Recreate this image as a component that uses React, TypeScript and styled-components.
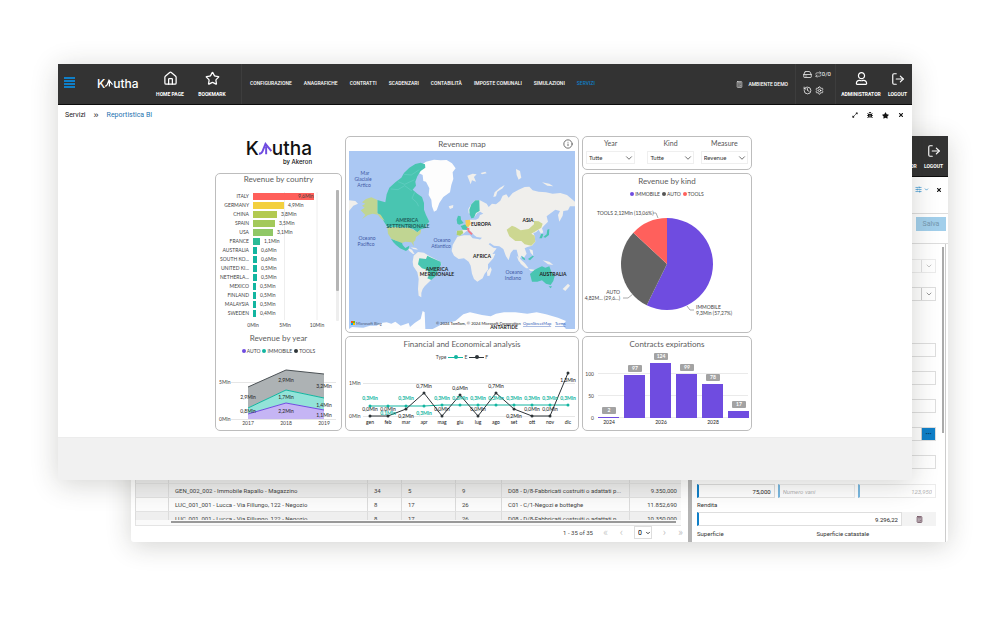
import React from "react";
import styled, { createGlobalStyle } from "styled-components";
import {
  Calculator,
  ChevronDown,
  HardDrive,
  History,
  House,
  Info,
  LogOut,
  Repeat,
  Settings,
  SlidersHorizontal,
  Star,
} from "lucide-react";
import { FaBug, FaExpandAlt, FaRegUser, FaStar, FaTimes } from "react-icons/fa";

const ui = `Roboto, "Liberation Sans", sans-serif`;
const report = `Lato, "Open Sans", sans-serif`;
const violet = "#6f4ce0";
const teal = "#12b5a0";
const ink = "#2d3438";
const blue = "#0f7fc8";

const GlobalStyle = createGlobalStyle`
  * { box-sizing: border-box; }
  body { margin: 0; background: #fff; font-family: ${ui}; color: #333; }
  button, input, select { font-family: inherit; }
  button { border: 0; padding: 0; background: none; cursor: pointer; }
  h1, h2 { margin: 0; font-weight: 400; }
  svg { display: block; }
`;

/* ---------- desktop ---------- */

const Stage = styled.main`
  display: grid;
  padding: 64px 52px 98px 58px;
`;

const WindowFrame = styled.section`
  grid-area: 1 / 1;
  background: #fff;
  box-shadow: 0 4px 26px rgba(40, 38, 30, 0.2);
`;

const FrontWindow = styled(WindowFrame)`
  z-index: 1;
  align-self: start;
  margin-right: 36px;
`;

const BackWindow = styled(WindowFrame)`
  margin: 72px 0 0 73px;
  border-radius: 0 0 3px 3px;
`;

/* ---------- header ---------- */

const Header = styled.header`
  display: flex;
  align-items: stretch;
  height: 41px;
  background: #333;
  border-bottom: 1px solid #0c0c0c;
  color: #fff;
`;

const MenuButton = styled.button`
  display: grid;
  align-content: center;
  gap: 1px;
  width: 11px;
  margin-left: 6px;
  padding-bottom: 3px;
`;

const MenuLine = styled.span`
  height: 2px;
  background: ${blue};
`;

const Brand = styled.a`
  display: flex;
  align-items: center;
  width: 56px;
  margin-left: 22px;
  padding-bottom: 2px;
  color: #fff;
  font: 500 12px Inter, sans-serif;
  text-decoration: none;
`;

const IconAction = styled.button<{ $width: number }>`
  display: flex;
  flex-direction: column;
  align-items: center;
  justify-content: flex-start;
  gap: 4px;
  width: ${(p) => p.$width}px;
  padding-top: 7px;
  color: #fff;
  font-size: 5px;
  font-weight: 700;
  line-height: 8px;
  white-space: nowrap;
`;

const IconSlot = styled.span`
  display: grid;
  place-items: center;
  height: 15px;
`;

const Nav = styled.nav`
  display: flex;
  flex: 1;
  align-items: center;
  gap: 12px;
  margin-left: 4px;
  padding: 0 0 2px 8px;
  border-left: 1px solid #3d3d3d;
`;

const NavLink = styled.a<{ $current?: boolean }>`
  color: ${(p) => (p.$current ? blue : "#fff")};
  font: 500 5px/8px ${ui};
  text-decoration: none;
  white-space: nowrap;
`;

const Environment = styled.button`
  display: flex;
  align-items: center;
  gap: 5px;
  margin-right: 7px;
  color: #fff;
  font: 500 5px/8px ${ui};
`;

const Tools = styled.div`
  display: grid;
  grid-template-columns: 10px 16px;
  align-content: space-evenly;
  gap: 2px;
  width: 41px;
  padding: 0 0 3px 7px;
  border-left: 1px solid #3d3d3d;
  border-right: 1px solid #3d3d3d;
`;

const Tool = styled.button`
  display: flex;
  align-items: center;
  color: #fff;
  font-size: 6px;
  line-height: 8px;
`;

const Account = styled.div`
  display: flex;
  margin-left: auto;
  padding-right: 3px;
`;

/* ---------- front window ---------- */

const Crumbs = styled.div`
  display: flex;
  align-items: center;
  height: 20px;
  padding: 0 8px 0 7px;
  font-size: 7px;
  line-height: 10px;
`;

const Crumb = styled.a<{ $current?: boolean }>`
  color: ${(p) => (p.$current ? "#1f74b0" : "#222")};
  text-decoration: none;
`;

const CrumbMark = styled.span`
  margin: 0 8px;
  color: #222;
  font: 400 9px/9px "Liberation Sans", sans-serif;
`;

const PageActions = styled.div`
  display: flex;
  gap: 9px;
  margin-left: auto;
`;

const PageAction = styled.button<{ $tone?: string }>`
  display: flex;
  align-items: center;
  gap: 2px;
  color: ${(p) => p.$tone ?? "#111"};
`;

const WindowFooter = styled.footer`
  height: 43px;
  background: #f1f1f1;
  border-top: 1px solid #ececec;
`;

const Dashboard = styled.div`
  display: grid;
  grid-template-columns: 127fr 234fr 170fr;
  gap: 3px;
  width: calc(100% - 32px);
  max-width: 537px;
  margin: 0 auto;
  padding: 11px 0 6px;
  font-family: ${report};
`;

const Canvas = styled.div`
  padding-right: 3px;
`;

const Column = styled.div`
  display: flex;
  flex-direction: column;
  gap: 3px;
  min-width: 0;
`;

const Card = styled.section`
  border: 1px solid #bdbdbd;
  border-radius: 5px;
  background: #fff;
`;

const CardTitle = styled.h2<{ $raised?: boolean }>`
  height: 14px;
  color: #5c5c5c;
  font: 400 8px ${report};
  line-height: ${(p) => (p.$raised ? 11 : 14)}px;
  text-align: center;
  white-space: nowrap;
`;

const Legend = styled.div`
  display: flex;
  align-items: center;
  justify-content: center;
  gap: 2px;
  height: 12px;
  color: #444;
  font-size: 5px;
  line-height: 12px;
`;

const LegendItem = styled.span`
  display: flex;
  align-items: center;
  gap: 1px;
`;

const Dot = styled.i<{ $color: string }>`
  width: 4px;
  height: 4px;
  border-radius: 50%;
  background: ${(p) => p.$color};
`;

const LineKey = styled.i<{ $color: string }>`
  display: grid;
  place-items: center;
  width: 15px;
  height: 4px;
  background: linear-gradient(${(p) => p.$color}, ${(p) => p.$color}) center / 100% 1px no-repeat;
`;

const Chart = styled.svg`
  width: 100%;
  height: auto;
  font: 400 5px ${report};
  fill: #444;
`;

const ReportLogo = styled.div`
  display: flex;
  flex-direction: column;
  align-items: flex-end;
  height: 34px;
  padding: 3px 30px 0 0;
  color: #111;
`;

const LogoWord = styled.div`
  display: flex;
  align-items: center;
  font: 500 19px/19px Inter, sans-serif;
`;

const LogoBy = styled.div`
  font: 500 6px/8px Inter, sans-serif;
`;

const MapHead = styled.div`
  display: grid;
  grid-template-columns: 1fr auto 1fr;
  align-items: center;
`;

const InfoButton = styled.button`
  grid-column: 3;
  justify-self: end;
  margin-right: 5px;
  color: #555;
`;

const MapTitle = styled(CardTitle)`
  grid-column: 2;
`;

const MapWrap = styled.div`
  padding: 0 3px 3px;
`;

const Slicers = styled(Card)`
  display: grid;
  grid-template-columns: 61fr 53fr 47fr;
  height: 34px;
  padding: 0 3px;
`;

const Slicer = styled.div<{ $gap: number }>`
  display: flex;
  flex-direction: column;
  padding-right: ${(p) => p.$gap}px;
`;

const SlicerLabel = styled.label`
  color: #555;
  font-size: 7px;
  line-height: 12px;
  text-align: center;
`;

const SelectBox = styled.div`
  display: grid;
  align-items: center;
  margin-top: 2px;
  > * { grid-area: 1 / 1; }
  > svg { justify-self: end; margin-right: 1px; pointer-events: none; }
`;

const SlicerSelect = styled.select`
  width: 100%;
  height: 13px;
  padding: 0 2px;
  appearance: none;
  border: 1px solid #efefef;
  background: #fff;
  color: #333;
  font-size: 6px;
`;

/* ---------- back window ---------- */

const BackToolbar = styled.div`
  display: flex;
  justify-content: flex-end;
  gap: 7px;
  height: 36px;
  padding: 7px 6px 18px;
`;

const SaveBar = styled.div`
  display: flex;
  justify-content: flex-end;
  align-items: flex-start;
  height: 30px;
  padding: 3px 2px;
  border-top: 1px solid #ddd;
`;

const SaveButton = styled.button`
  width: 30px;
  height: 14px;
  background: #a2cfeb;
  color: #7698ad;
  font-size: 7px;
`;

const Split = styled.div`
  display: flex;
`;

const ListPane = styled.div`
  display: flex;
  flex: 1;
  flex-direction: column;
  justify-content: flex-end;
  min-width: 0;
`;

const Splitter = styled.div`
  width: 4px;
  background: #b4b4b4;
`;

const TableClip = styled.div`
  display: flex;
  flex-direction: column;
  height: 51px;
  margin: 0 7px 0 4px;
  overflow: hidden;
`;

const Table = styled.table`
  width: 100%;
  table-layout: fixed;
  border-collapse: separate;
  border-spacing: 0;
  color: #444;
  font-size: 6px;
  line-height: 10px;
`;

const Row = styled.tr<{ $shade: string }>`
  background: ${(p) => p.$shade};
`;

const Cell = styled.td<{ $end?: boolean }>`
  height: 14px;
  padding: 0 4px 0 6px;
  overflow: hidden;
  border-top: 1px solid #e2e2e2;
  border-left: 1px solid #dcdcdc;
  text-align: ${(p) => (p.$end ? "right" : "left")};
  white-space: nowrap;
`;

const ScrollTrack = styled.div`
  margin: 0 7px 0 4px;
  padding: 1px 5px 2px 35px;
  border: solid #e4e4e4;
  border-width: 0 0 1px 1px;
  background: #fafafa;
`;

const ScrollThumb = styled.div`
  height: 2px;
  background: #999;
`;

const Pager = styled.div`
  display: flex;
  align-items: center;
  justify-content: flex-end;
  gap: 9px;
  height: 16px;
  padding: 0 4px 3px 0;
  color: #444;
  font-size: 6px;
`;

const PageButton = styled.button`
  width: 7px;
  color: #bbb;
  font-size: 11px;
  font-weight: 300;
  line-height: 12px;
`;

const PageSelect = styled.select`
  width: 18px;
  height: 13px;
  border: 1px solid #ddd;
  background: #fff;
  font-size: 7px;
  appearance: none;
  padding: 0 3px;
`;

const PageSelectBox = styled(SelectBox)`
  margin: 0;
`;

const FormPane = styled.form`
  display: grid;
  grid-template-columns: 1fr 4px;
  gap: 6px;
  width: 256px;
  padding: 0 2px 0 5px;
  border-top: 1px solid #ddd;
`;

const Fields = styled.div`
  display: flex;
  flex-direction: column;
  gap: 14px;
  padding-top: 15px;
`;

const FormScroll = styled.div`
  border-right: 1px solid #ccc;
`;

const FormThumb = styled.div`
  width: 2px;
  height: 186px;
  margin-top: 3px;
  background: #aaa;
`;

const Field = styled.div<{ $faded?: boolean }>`
  display: flex;
  height: 14px;
  border: 1px solid #dedede;
  background: #fff;
  opacity: ${(p) => (p.$faded ? 0.55 : 1)};
`;

const BarField = styled(Field)`
  flex: 1;
  border-left: 2px solid ${blue};
`;

const Input = styled.input<{ $end?: boolean }>`
  flex: 1;
  width: 20px;
  min-width: 0;
  padding: 0 3px;
  border: 0;
  background: none;
  color: #222;
  font-size: 6px;
  text-align: ${(p) => (p.$end ? "right" : "left")};
  &::placeholder { color: #777; font-style: italic; }
`;

const FieldButton = styled.button<{ $solid?: boolean }>`
  display: grid;
  place-items: center;
  width: 14px;
  border-left: 1px solid #ccc;
  background: ${(p) => (p.$solid ? blue : "none")};
  color: ${(p) => (p.$solid ? "#04365a" : "#666")};
  font-size: 6px;
  line-height: 8px;
`;

const Gap = styled.div`
  height: 14px;
`;

const TripleRow = styled.div`
  display: grid;
  grid-template-columns: repeat(3, 1fr);
  gap: 3px;
  margin-top: 1px;
`;

const Labelled = styled.div`
  display: flex;
  flex-direction: column;
  margin-top: -14px;
`;

const FieldLabel = styled.label`
  color: #333;
  font-size: 6px;
  line-height: 14px;
`;

const FieldLine = styled.div`
  display: flex;
  background: #f3f3f3;
`;

const CalcButton = styled.button`
  display: grid;
  place-items: center;
  width: 34px;
  color: #6a4a5a;
`;

const SurfaceLabels = styled.div`
  display: grid;
  grid-template-columns: 1fr 1fr;
  margin-top: -13px;
  padding-bottom: 1px;
`;

/* ---------- data ---------- */

const navItems = [
  "CONFIGURAZIONE",
  "ANAGRAFICHE",
  "CONTRATTI",
  "SCADENZARI",
  "CONTABILITÀ",
  "IMPOSTE COMUNALI",
  "SIMULAZIONI",
  "SERVIZI",
];

const countries: [string, number, string, string][] = [
  ["ITALY", 61, "9,6Mln", "#ff5f5a"],
  ["GERMANY", 31, "4,9Mln", "#f3d03e"],
  ["CHINA", 24, "3,8Mln", "#b3ca50"],
  ["SPAIN", 22, "3,5Mln", "#a3c95a"],
  ["USA", 20, "3,1Mln", "#90c766"],
  ["FRANCE", 7, "1,1Mln", "#2bbb97"],
  ["AUSTRALIA", 4, "0,6Mln", teal],
  ["SOUTH KO...", 4, "0,6Mln", teal],
  ["UNITED KI...", 4, "0,5Mln", teal],
  ["NETHERLA...", 4, "0,5Mln", teal],
  ["MEXICO", 3, "0,5Mln", teal],
  ["FINLAND", 3, "0,5Mln", teal],
  ["MALAYSIA", 3, "0,5Mln", teal],
  ["SWEDEN", 3, "0,4Mln", teal],
];

const months = ["gen", "feb", "mar", "apr", "mag", "giu", "lug", "ago", "set", "ott", "nov", "dic"];

/* y of the F line, its caption, y of the caption */
const fSeries: [number, string, number][] = [
  [53, "0,0Mln", 48],
  [53, "0,0Mln", 48],
  [46, "0,2Mln", 55],
  [30, "0,7Mln", 25],
  [53, "0,0Mln", 48],
  [32, "0,6Mln", 27],
  [53, "0,0Mln", 48],
  [30, "0,7Mln", 25],
  [46, "0,2Mln", 55],
  [53, "0,0Mln", 48],
  [53, "0,0Mln", 48],
  [10, "1,3Mln", 19],
];

const contracts: [number, string][] = [
  [2, "2024"],
  [97, ""],
  [124, "2026"],
  [99, ""],
  [78, "2028"],
  [17, ""],
];

const rows = [
  ["GEN_002_001 - Immobile Rapallo - Magazzino", "34", "5", "8", "D08 - D/8-Fabbricati costruiti o adattati p...", "9.350,000"],
  ["GEN_002_002 - Immobile Rapallo - Magazzino", "34", "5", "9", "D08 - D/8-Fabbricati costruiti o adattati p...", "9.350,000"],
  ["LUC_001_001 - Lucca - Via Fillungo, 122 - Negozio", "8", "17", "26", "C01 - C/1-Negozi e botteghe", "11.852,690"],
  ["LUC_001_001 - Lucca - Via Fillungo, 122 - Negozio", "8", "17", "26", "D08 - D/8-Fabbricati costruiti o adattati p...", "10.350,000"],
];

/* ---------- pieces ---------- */

function ArrowMark({ size, color }: { size: number; color: string }) {
  return (
    <svg width={size} height={size} viewBox="0 0 20 20" fill="none" stroke={color} strokeWidth="3" aria-hidden>
      <path d="M0 18C3 18 5 16 6 13L10 3L19 14M11 7V19" />
    </svg>
  );
}

function AccountActions() {
  return (
    <Account>
      <IconAction $width={50}>
        <IconSlot><FaRegUser size={13} /></IconSlot>
        ADMINISTRATOR
      </IconAction>
      <IconAction $width={23}>
        <IconSlot><LogOut size={14} strokeWidth={2} /></IconSlot>
        LOGOUT
      </IconAction>
    </Account>
  );
}

function MainHeader() {
  return (
    <Header>
      <MenuButton aria-label="Menu">
        <MenuLine /><MenuLine /><MenuLine /><MenuLine />
      </MenuButton>
      <Brand href="#">K<ArrowMark size={8} color="#fff" />utha</Brand>
      <IconAction $width={34}>
        <IconSlot><House size={15} strokeWidth={2} /></IconSlot>
        HOME PAGE
      </IconAction>
      <IconAction $width={50}>
        <IconSlot><Star size={15} strokeWidth={2} /></IconSlot>
        BOOKMARK
      </IconAction>
      <Nav>
        {navItems.map((n) => (
          <NavLink key={n} href="#" $current={n === "SERVIZI"}>{n}</NavLink>
        ))}
      </Nav>
      <Environment><Calculator size={7} />AMBIENTE DEMO</Environment>
      <Tools>
        <Tool aria-label="Archive"><HardDrive size={9} /></Tool>
        <Tool><Repeat size={9} />0/0</Tool>
        <Tool aria-label="History"><History size={9} /></Tool>
        <Tool aria-label="Settings"><Settings size={9} /></Tool>
      </Tools>
      <AccountActions />
    </Header>
  );
}

function CountryChart() {
  return (
    <Chart viewBox="0 0 125 143">
      <path d="M68.500 4V132M101 4V132" stroke="#eee" />
      {countries.map(([name, w, value, color], i) => (
        <g key={name} transform={`translate(0 ${8 + i * 9})`}>
          <text x="33" y="2" textAnchor="end">{name}</text>
          <rect x="37" y="-3" width={w} height="7" fill={color} />
          <text x={i === 0 ? 82 : 41 + w} y="2">{value}</text>
        </g>
      ))}
      <rect x="120" y="2" width="3" height="131" fill="#eee" rx="1" />
      <rect x="120" y="2" width="3" height="101" fill="#b5b5b5" rx="1" />
      <g textAnchor="middle">
        <text x="37" y="139">0Mln</text>
        <text x="69" y="139">5Mln</text>
        <text x="101" y="139">10Mln</text>
      </g>
    </Chart>
  );
}

function YearChart() {
  const captions: [number, number, string][] = [
    [32, 42, "2,9Mln"], [70, 25, "2,9Mln"], [108, 31, "3,2Mln"],
    [32, 56, "0,8Mln"], [70, 42, "1,7Mln"], [108, 50, "1,4Mln"],
    [70, 56, "2,2Mln"], [108, 60, "1,1Mln"],
  ];
  return (
    <Chart viewBox="0 0 125 73">
      <path d="M15 25.500H120M15 62.500H120" stroke="#e6e6e6" />
      <path d="M32 30L70 13L108 17V41L70 33L32 51Z" fill="#adb2b4" />
      <path d="M32 51L70 33L108 41V53L70 46L32 57Z" fill="#93e3d8" />
      <path d="M32 57L70 46L108 53V62H32Z" fill="#c5b5f4" />
      <g fill="none">
        <path d="M32 30L70 13L108 17" stroke="#4b5155" />
        <path d="M32 51L70 33L108 41" stroke={teal} />
        <path d="M32 57L70 46L108 53" stroke={violet} />
      </g>
      <text x="3" y="27">5Mln</text>
      <text x="3" y="64">0Mln</text>
      <g textAnchor="middle">
        {["2017", "2018", "2019"].map((y, i) => (
          <text key={y} x={32 + i * 38} y="68">{y}</text>
        ))}
        <g fill="#222">
          {captions.map(([x, y, t]) => <text key={`${x}-${y}`} x={x} y={y}>{t}</text>)}
        </g>
      </g>
    </Chart>
  );
}

function FinancialChart() {
  const x = (i: number) => 24 + i * 18;
  const eY = (i: number) => (i > 3 ? 42 : 43);
  return (
    <Chart viewBox="0 0 232 67">
      <path d="M17 20.500H229M17 53.500H229" stroke="#e6e6e6" />
      <text x="3" y="22">1Mln</text>
      <text x="3" y="55">0Mln</text>
      <polyline points={months.map((_, i) => `${x(i)},${eY(i)}`).join(" ")} fill="none" stroke={teal} />
      <polyline points={fSeries.map(([y], i) => `${x(i)},${y}`).join(" ")} fill="none" stroke={ink} />
      {months.map((m, i) => (
        <g key={m} textAnchor="middle">
          <circle cx={x(i)} cy={eY(i)} r="1.500" fill={teal} />
          <circle cx={x(i)} cy={fSeries[i][0]} r="1.500" fill={ink} />
          <text x={x(i)} y={i === 1 || i === 3 ? 52 : 37} fill={teal} fontWeight="700">
            {i === 1 ? "0,1Mln" : "0,3Mln"}
          </text>
          <text x={x(i)} y={fSeries[i][2]} fill="#111">{fSeries[i][1]}</text>
          <text x={x(i)} y="61" fill="#111">{m}</text>
        </g>
      ))}
    </Chart>
  );
}

function KindChart() {
  const at = (share: number) => {
    const a = share * 2 * Math.PI;
    return `${84 + 46 * Math.sin(a)} ${64 - 46 * Math.cos(a)}`;
  };
  const slice = (from: number, to: number) =>
    `M84 64L${at(from)}A46 46 0 ${to - from > 0.5 ? 1 : 0} 1 ${at(to)}Z`;
  return (
    <Chart viewBox="0 0 168 132">
      <path d={slice(0, 0.5727)} fill={violet} />
      <path d={slice(0.5727, 0.8694)} fill="#636363" />
      <path d={slice(0.8694, 1)} fill="#ff605c" />
      <path d="M70 13h3l2 5M40 98h5l5-4M104 106l3 4h4" fill="none" stroke="#aaa" />
      <text x="14" y="15">TOOLS 2,12Mln (13,06%)</text>
      <g textAnchor="end">
        <text x="37" y="94">AUTO</text>
        <text x="37" y="100">4,82M... (29,6...)</text>
      </g>
      <text x="113" y="109">IMMOBILE</text>
      <text x="113" y="115">9,3Mln (57,27%)</text>
    </Chart>
  );
}

function ContractsChart() {
  return (
    <Chart viewBox="0 0 168 79">
      <path d="M15 22.500H165M15 44.500H165M15 66.500H165" stroke="#eaeaea" />
      <g textAnchor="end">
        <text x="11" y="25">100</text>
        <text x="11" y="47">50</text>
        <text x="11" y="69">0</text>
      </g>
      {contracts.map(([v, year], i) => {
        const h = Math.max(1, Math.round(v * 0.44));
        return (
          <g key={i} transform={`translate(${15 + i * 26} 0)`} textAnchor="middle">
            <rect y={67 - h} width="21" height={h} fill={violet} />
            <rect x="4" y={57 - h} width="14" height="7" rx="1" fill="#a3a3a3" />
            <text x="11" y={62 - h} fill="#fff" fontWeight="700">{v}</text>
            <text x="11" y="73" fill="#222">{year}</text>
          </g>
        );
      })}
    </Chart>
  );
}

function WorldMap() {
  return (
    <Chart viewBox="0 0 226 178">
      <rect width="226" height="178" fill="#abc8f3" />
      <g transform="scale(.3333) translate(-21 -56)">
        {/* land */}
        <g fill="#f0efec">
          <path d="M345 308L344 296L362 293L358 281L368 277L384 262L390 262L402 262L410 258L414 248L424 244L415 238L406 242L400 250L394 258L389 246L380 243L379 230L388 216L400 203L414 204L434 214L440 224L450 214L462 216L475 205L482 190L493 186L500 196L512 182L530 172L548 164L562 163L572 174L590 178L612 180L632 184L655 182L675 188L699 208L699 222L684 222L678 234L664 236L662 250L652 268L648 248L654 236L640 232L622 246L614 252L618 268L606 280L600 288L604 300L597 304L590 292L582 300L574 302L578 312L580 328L570 340L556 344L548 348L554 364L546 376L538 370L534 380L544 398L550 406L536 394L530 376L524 352L514 352L506 362L500 384L492 372L484 350L472 342L456 340L444 332L440 336L454 346L464 348L452 364L436 372L430 360L420 338L414 322L420 316L404 314L396 308L388 298L374 296L364 304L352 310Z" />
          <path d="M346 313L366 309L384 309L392 318L408 320L420 324L430 344L442 366L460 364L454 378L438 396L438 412L428 424L422 438L406 448L396 440L390 424L386 400L380 388L366 378L350 380L336 370L329 356L332 338Z" />
          <path d="M446 404L449 412L443 430L436 431L435 418Z" />
          <path d="M215 370L228 359L246 361L258 369L272 376L296 388L298 396L288 412L280 430L268 442L258 452L248 462L242 470L238 482L238 495L230 490L228 470L230 440L226 420L214 402L212 388Z" />
          <path d="M196 346L210 352L218 366L212 364L202 356Z" />
          <path d="M206 345L222 347L228 352L214 350Z" />
          <path d="M320 222L334 218L333 226L324 230Z" />
          <path d="M376 130L392 124L404 126L396 134L402 148L390 144L386 156Z" />
          <path d="M416 122L430 118L434 123L420 126Z" />
          <path d="M454 194L458 180L474 166L488 158L482 168L466 178L462 192Z" />
          <path d="M522 110L534 116L538 136L530 142L524 128Z" />
          <path d="M600 150L622 154L634 162L616 160Z" />
          <path d="M524 370L548 392L560 408L552 408L530 386Z" />
          <path d="M602 384L622 388L634 398L618 396Z" />
          <path d="M562 350L572 354L574 370L566 362Z" />
          <path d="M662 470L678 454L684 460L670 476Z" />
          <path d="M21 204L40 206L48 214L34 220L21 236Z" />
          <path d="M560 410L578 412L596 410L590 415L566 416Z" />
        </g>
        {/* ice */}
        <g fill="#fdfdfd">
          <path d="M229 103L252 88L276 82L296 84L314 83L330 93L341 108L332 120L334 140L328 158L324 180L304 194L292 212L284 234L276 238L270 222L268 202L260 188L262 168L252 148L244 146L242 128L230 122Z" />
          <path d="M21 590L30 584L64 586L84 580L104 580L116 572L134 570L148 574L160 568L176 580L200 572L204 584L218 572L236 560L242 536L248 540L250 590Z" />
          <path d="M272 590L300 576L340 566L364 546L384 540L420 548L446 552L462 544L486 540L520 540L556 544L584 540L612 546L648 556L672 566L662 578L672 590Z" />
        </g>
        {/* countries with revenue */}
        <g fill="#49c5b1">
          <path d="M106 203L130 210L134 186L142 166L160 150L178 136L186 122L202 106L220 95L236 91L249 96L250 106L236 116L226 132L220 148L222 160L212 172L226 184L240 194L246 212L246 232L252 248L262 268L250 280L254 286L238 290L226 300L214 290L200 286L136 284L126 268L116 250L106 243Z" />
          <path d="M147 319L166 326L178 324L182 338L190 347L202 340L200 350L192 356L174 348L162 338L154 330Z" />
          <path d="M232 378L252 380L256 370L268 376L296 388L297 398L288 412L282 430L268 443L256 438L264 424L254 412L240 408L228 396Z" />
          <path d="M383 246L382 232L388 216L400 204L412 204L413 236L402 242L396 256L388 258Z" />
          <path d="M344 262L348 250L356 252L357 262L365 272L352 277L346 274Z" />
          <path d="M356 281L370 276L377 282L376 293L362 292Z" />
          <path d="M564 425L578 412L590 406L600 402L610 406L616 404L622 402L628 418L638 432L634 446L626 458L612 454L600 444L586 448L570 448Z" />
          <path d="M592 318L598 304L604 306L600 318Z" />
          <path d="M604 314L614 306L616 292L622 290L621 308L610 316Z" />
          <path d="M538 370L548 378L550 384L542 380ZM558 380L572 370L576 372L564 384Z" />
          <path d="M620 462L630 462L626 468Z" />
        </g>
        <g fill="none" stroke="#85d8d8" strokeWidth="2" opacity=".5">
          <path d="M146 170L168 172L188 160L210 176M168 148L188 156L218 142M186 126L208 128L232 112M218 180L210 198L224 210L230 222" />
        </g>
        <g fill="#c0d592">
          <path d="M106 203L106 243L116 247L128 266L116 258L108 247L92 244L78 248L60 260L70 248L56 234L68 226L60 220L70 214L60 210L72 200L88 195Z" />
          <path d="M136 284L200 286L214 292L226 300L238 290L235 304L222 314L220 324L214 330L216 342L208 330L190 328L180 332L164 326L148 319L138 304Z" />
        </g>
        <path d="M345 295L361 294L364 302L354 310L344 308Z" fill="#aed06c" />
        <path d="M494 292L510 280L520 284L536 294L560 290L576 276L576 266L590 267L602 274L598 286L582 296L568 304L578 310L580 328L568 340L548 336L538 326L520 326L502 312Z" fill="#cdd791" />
        <path d="M370 264L384 262L386 274L380 284L372 282Z" fill="#f6cd58" />
        <path d="M373 287L382 286L382 294L392 304L388 308L378 298Z" fill="#f27a86" />
      </g>
      <g fill="#3f58a5" textAnchor="middle">
        <text x="16" y="24">Mar</text>
        <text x="14" y="30">Glaciale</text>
        <text x="15" y="36">Artico</text>
        <text x="18" y="89">Oceano</text>
        <text x="17" y="95">Pacifico</text>
        <text x="93" y="91">Oceano</text>
        <text x="92" y="97">Atlantico</text>
        <text x="165" y="123">Oceano</text>
        <text x="164" y="129">Indiano</text>
      </g>
      <g fill="#1d5c58" textAnchor="middle" fontWeight="700">
        <text x="58" y="71">AMERICA</text>
        <text x="59" y="77">SETTENTRIONALE</text>
      </g>
      <g fill="#222" textAnchor="middle" fontWeight="700">
        <text x="132" y="75">EUROPA</text>
        <text x="179" y="71">ASIA</text>
        <text x="133" y="107">AFRICA</text>
        <text x="88" y="120">AMERICA</text>
        <text x="88" y="125">MERIDIONALE</text>
        <text x="204" y="125">AUSTRALIA</text>
        <text x="155" y="178">ANTARTIDE</text>
      </g>
      <path d="M2 170h2v2h-2z" fill="#f25022" />
      <path d="M4 170h2v2h-2z" fill="#7fba00" />
      <path d="M2 172h2v2h-2z" fill="#00a4ef" />
      <path d="M4 172h2v2h-2z" fill="#ffb900" />
      <g fontSize="4">
        <text x="7" y="174" fill="#4a5a78">Microsoft Bing</text>
        <text x="87" y="174" fill="#222">© 2024 TomTom, © 2024 Microsoft Corporation</text>
        <a href="#"><text x="174" y="174" fill="#2b57b5" textDecoration="underline">OpenStreetMap</text></a>
        <a href="#"><text x="206" y="174" fill="#2b57b5" textDecoration="underline">Terms</text></a>
      </g>
    </Chart>
  );
}

function SlicerField({ id, label, value, gap }: { id: string; label: string; value: string; gap: number }) {
  return (
    <Slicer $gap={gap}>
      <SlicerLabel htmlFor={id}>{label}</SlicerLabel>
      <SelectBox>
        <SlicerSelect id={id} defaultValue={value}><option>{value}</option></SlicerSelect>
        <ChevronDown size={10} strokeWidth={2} color="#555" />
      </SelectBox>
    </Slicer>
  );
}

function KeyList({ items }: { items: [string, string][] }) {
  return (
    <Legend>
      {items.map(([name, color]) => (
        <LegendItem key={name}><Dot $color={color} />{name}</LegendItem>
      ))}
    </Legend>
  );
}

function ReportWindow() {
  return (
    <FrontWindow>
      <MainHeader />
      <Crumbs>
        <Crumb href="#">Servizi</Crumb>
        <CrumbMark>»</CrumbMark>
        <Crumb href="#" $current>Reportistica BI</Crumb>
        <PageActions>
          <PageAction aria-label="Expand"><FaExpandAlt size={6} /></PageAction>
          <PageAction aria-label="Report a bug"><FaBug size={6} /></PageAction>
          <PageAction aria-label="Add to bookmarks"><FaStar size={7} /></PageAction>
          <PageAction aria-label="Close"><FaTimes size={6} /></PageAction>
        </PageActions>
      </Crumbs>
      <Canvas>
        <Dashboard>
          <Column>
            <ReportLogo>
              <LogoWord>K<ArrowMark size={13} color={violet} />utha</LogoWord>
              <LogoBy>by Akeron</LogoBy>
            </ReportLogo>
            <Card>
              <CardTitle $raised>Revenue by country</CardTitle>
              <CountryChart />
              <CardTitle>Revenue by year</CardTitle>
              <KeyList items={[["AUTO", violet], ["IMMOBILE", teal], ["TOOLS", ink]]} />
              <YearChart />
            </Card>
          </Column>
          <Column>
            <Card>
              <MapHead>
                <MapTitle>Revenue map</MapTitle>
                <InfoButton aria-label="Info"><Info size={10} strokeWidth={2} /></InfoButton>
              </MapHead>
              <MapWrap><WorldMap /></MapWrap>
            </Card>
            <Card>
              <CardTitle>Financial and Economical analysis</CardTitle>
              <Legend>
                <LegendItem>Type</LegendItem>
                <LegendItem><LineKey $color={teal}><Dot $color={teal} /></LineKey>E</LegendItem>
                <LegendItem><LineKey $color={ink}><Dot $color={ink} /></LineKey>F</LegendItem>
              </Legend>
              <FinancialChart />
            </Card>
          </Column>
          <Column>
            <Slicers>
              <SlicerField id="year" label="Year" value="Tutte" gap={12} />
              <SlicerField id="kind" label="Kind" value="Tutte" gap={7} />
              <SlicerField id="measure" label="Measure" value="Revenue" gap={0} />
            </Slicers>
            <Card>
              <CardTitle>Revenue by kind</CardTitle>
              <KeyList items={[["IMMOBILE", violet], ["AUTO", "#555"], ["TOOLS", "#ff605c"]]} />
              <KindChart />
            </Card>
            <Card>
              <CardTitle>Contracts expirations</CardTitle>
              <ContractsChart />
            </Card>
          </Column>
        </Dashboard>
      </Canvas>
      <WindowFooter />
    </FrontWindow>
  );
}

function PropertyWindow() {
  return (
    <BackWindow>
      <Header><AccountActions /></Header>
      <BackToolbar>
        <PageAction aria-label="Filters" $tone={blue}>
          <SlidersHorizontal size={7} /><ChevronDown size={5} strokeWidth={3} />
        </PageAction>
        <PageAction aria-label="Close window"><FaTimes size={6} /></PageAction>
      </BackToolbar>
      <SaveBar><SaveButton>Salva</SaveButton></SaveBar>
      <Split>
        <ListPane>
          <TableClip>
            <Table>
              <colgroup>
                <col width="33" />
                <col />
                <col width="34" />
                <col width="54" />
                <col width="46" />
                <col width="128" />
                <col width="52" />
              </colgroup>
              <tbody>
                {rows.map((r, i) => (
                  <Row key={i} $shade={i === 2 ? "#fcfcfc" : "#efefef"}>
                    <Cell />
                    {r.map((c, j) => <Cell key={j} $end={j === 5}>{c}</Cell>)}
                  </Row>
                ))}
              </tbody>
            </Table>
          </TableClip>
          <ScrollTrack><ScrollThumb /></ScrollTrack>
          <Pager>
            1 - 35 of 35
            <PageButton aria-label="First page">«</PageButton>
            <PageButton aria-label="Previous page">‹</PageButton>
            <PageSelectBox>
              <PageSelect aria-label="Page"><option>0</option></PageSelect>
              <ChevronDown size={6} strokeWidth={4} />
            </PageSelectBox>
            <PageButton aria-label="Next page">›</PageButton>
            <PageButton aria-label="Last page">»</PageButton>
          </Pager>
        </ListPane>
        <Splitter />
        <FormPane>
          <Fields>
            <Field $faded>
              <Input aria-label="Categoria" />
              <FieldButton type="button" aria-label="Open list"><ChevronDown size={8} /></FieldButton>
            </Field>
            <Field>
              <Input aria-label="Classe" />
              <FieldButton type="button" aria-label="Open list"><ChevronDown size={8} /></FieldButton>
            </Field>
            <Gap />
            <Field><Input aria-label="Foglio" /></Field>
            <Field><Input aria-label="Particella" /></Field>
            <Field><Input aria-label="Subalterno" /></Field>
            <Field>
              <Input aria-label="Partita" />
              <FieldButton type="button" $solid aria-label="More">•••</FieldButton>
            </Field>
            <Field><Input aria-label="Zona" /></Field>
            <TripleRow>
              <BarField><Input $end aria-label="Consistenza" defaultValue="75,000" /></BarField>
              <BarField $faded><Input aria-label="Numero vani" placeholder="Numero vani" /></BarField>
              <BarField $faded><Input $end aria-label="Superficie totale" placeholder="123,950" /></BarField>
            </TripleRow>
            <Labelled>
              <FieldLabel htmlFor="rendita">Rendita</FieldLabel>
              <FieldLine>
                <BarField><Input id="rendita" $end defaultValue="9.296,22" /></BarField>
                <CalcButton type="button" aria-label="Calculate"><Calculator size={7} strokeWidth={3} /></CalcButton>
              </FieldLine>
            </Labelled>
            <SurfaceLabels>
              <FieldLabel as="span">Superficie</FieldLabel>
              <FieldLabel as="span">Superficie catastale</FieldLabel>
            </SurfaceLabels>
          </Fields>
          <FormScroll><FormThumb /></FormScroll>
        </FormPane>
      </Split>
    </BackWindow>
  );
}

export default function App() {
  return (
    <>
      <GlobalStyle />
      <Stage>
        <PropertyWindow />
        <ReportWindow />
      </Stage>
    </>
  );
}
